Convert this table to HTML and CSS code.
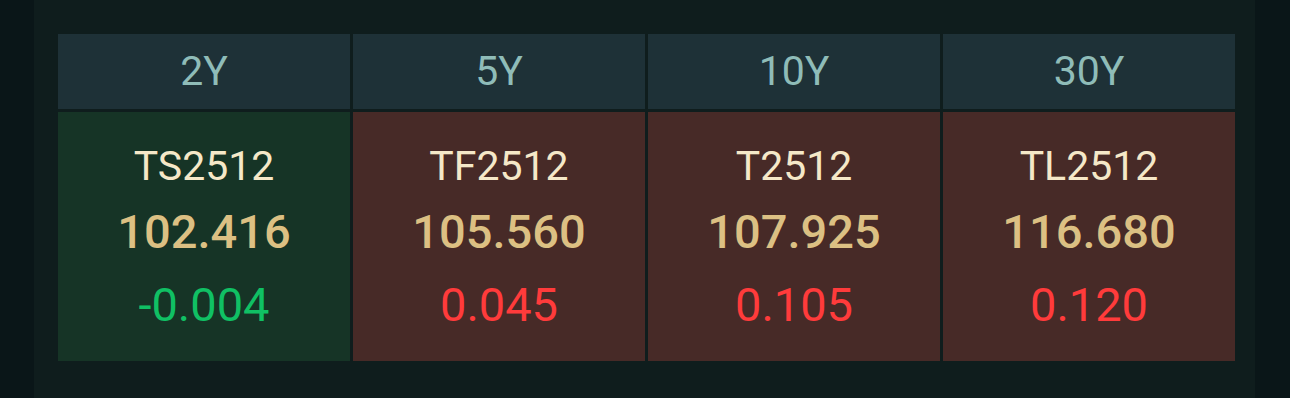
FILE: index.html
```html
<!DOCTYPE html>
<html lang="en">
<head>
<meta charset="utf-8">
<title>Treasury Futures</title>
<link rel="stylesheet" href="styles.css">
</head>
<body>
<div class="panel">
  <div class="grid">
    <div class="head">2Y</div>
    <div class="head">5Y</div>
    <div class="head">10Y</div>
    <div class="head">30Y</div>

    <div class="cell down">
      <div class="name">TS2512</div>
      <div class="price">102.416</div>
      <div class="chg">-0.004</div>
    </div>
    <div class="cell up">
      <div class="name">TF2512</div>
      <div class="price">105.560</div>
      <div class="chg">0.045</div>
    </div>
    <div class="cell up">
      <div class="name">T2512</div>
      <div class="price">107.925</div>
      <div class="chg">0.105</div>
    </div>
    <div class="cell up">
      <div class="name">TL2512</div>
      <div class="price">116.680</div>
      <div class="chg">0.120</div>
    </div>
  </div>
</div>
</body>
</html>
```

FILE: styles.css
```css
html, body {
  margin: 0;
  padding: 0;
  height: 100%;
}
body {
  background: #0a1618;
  font-family: Roboto, "Noto Sans", sans-serif;
}
.panel {
  margin-left: 34px;
  width: 1221px;
  height: 398px;
  box-sizing: border-box;
  padding: 34px 20px 0 24px;
  background: #0f1d1d;
}
.grid {
  display: grid;
  grid-template-columns: repeat(4, 292px);
  grid-template-rows: 75px 249px;
  gap: 3px;
}
.head {
  background: #1e3137;
  color: #8fbcb8;
  font-size: 41px;
  line-height: 75px;
  text-align: center;
}
.cell {
  display: flex;
  flex-direction: column;
  align-items: center;
  padding-top: 24px;
  box-sizing: border-box;
}
.cell.down { background: #163426; }
.cell.up { background: #472a27; }
.name {
  color: #f5e8c8;
  font-size: 41px;
  line-height: 61px;
}
.price {
  color: #dcc083;
  font-size: 47px;
  font-weight: 500;
  line-height: 70px;
}
.chg {
  font-size: 47px;
  line-height: 75px;
}
.down .chg { color: #10c064; }
.up .chg { color: #ff3b3b; }
```
